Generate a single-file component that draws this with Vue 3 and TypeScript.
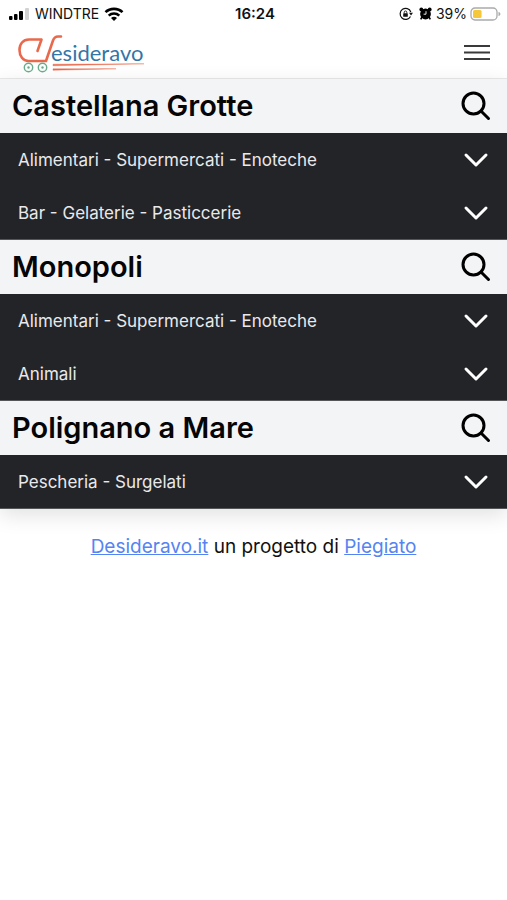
<script setup lang="ts">
import { ref } from 'vue'

interface City {
  name: string
  categories: string[]
}

const cities: City[] = [
  {
    name: 'Castellana Grotte',
    categories: ['Alimentari - Supermercati - Enoteche', 'Bar - Gelaterie - Pasticcerie'],
  },
  { name: 'Monopoli', categories: ['Alimentari - Supermercati - Enoteche', 'Animali'] },
  { name: 'Polignano a Mare', categories: ['Pescheria - Surgelati'] },
]

const battery = ref(39)
</script>

<template>
  <div class="page">
    <div class="status">
      <div class="status-side">
        <svg width="21" height="12" viewBox="0 0 21 12" aria-hidden="true">
          <rect x="0" y="8" width="3.500" height="4" rx="1" />
          <rect x="5" y="6" width="3.500" height="6" rx="1" />
          <rect x="10" y="3" width="4" height="9" rx="1" />
          <rect x="16" y="0" width="4" height="12" rx="1" fill="#d2d2d2" />
        </svg>
        <span class="carrier">WINDTRE</span>
        <svg width="20" height="14" viewBox="0 0 20 14" fill="none" stroke="#000" stroke-width="2.6" aria-hidden="true">
          <path d="M1.500 5.200C6 .7 14 .7 18.500 5.200" />
          <path d="M4.700 8.600c3-2.800 7.600-2.800 10.600 0" />
          <path d="M7 10.900c1.800-1.500 4.200-1.500 6 0L10 14Z" fill="#000" stroke="none" />
        </svg>
      </div>
      <time class="clock">16:24</time>
      <div class="status-side status-end">
        <svg width="14" height="14" viewBox="0 0 14 14" fill="none" stroke="#111" stroke-width="1.200" aria-hidden="true">
          <path d="M11.800 5A5.500 5.500 0 1 0 11.500 9.500" />
          <path d="M10 5.800h4L12 8.500Z" fill="#111" stroke="none" />
          <rect x="4.200" y="6.300" width="4.600" height="3.500" rx=".6" fill="#111" stroke="none" />
          <path d="M5.200 6.500V5.300a1.300 1.300 0 0 1 2.600 0v1.200" stroke-width=".9" />
        </svg>
        <svg class="alarm" width="13" height="13" viewBox="0 0 13 13" aria-hidden="true">
          <circle cx="6.500" cy="7" r="5.400" />
          <circle cx="2.300" cy="2.500" r="1.900" />
          <circle cx="10.700" cy="2.500" r="1.900" />
          <path d="m3 10-1.300 2.300M10 10l1.300 2.300" stroke="#000" stroke-width="1.600" />
          <path d="M7 4.200v3H4.600" fill="none" stroke="#fff" stroke-width=".9" />
        </svg>
        <span class="percent">{{ battery }}%</span>
        <svg width="31" height="14" viewBox="0 0 31 14" aria-hidden="true">
          <rect x="1" y="1" width="26" height="12" rx="4" fill="#fff" stroke="#aaa" stroke-width="1.300" />
          <rect x="3" y="3" :width="battery * 0.22" height="8" rx="1.500" fill="#f5c83c" />
          <path d="M28.500 5c2.500.5 2.500 3.500 0 4Z" fill="#aaa" />
        </svg>
      </div>
    </div>

    <header class="topbar">
      <a class="brand" href="#" aria-label="Desideravo">
        <svg width="130" height="42" viewBox="0 0 130 42" fill="none" aria-hidden="true">
          <g stroke="#e9694c" stroke-width="2.600" stroke-linecap="round" stroke-linejoin="round">
            <path d="M19.500 19 23.500 7.500H11C5 7.500 1.500 12 1.500 18S5 29 10.500 29H28L35 8.500q1.500-4 5-4h3" />
          </g>
          <g stroke="#69ac8c" stroke-width="1.400">
            <circle cx="10.500" cy="35.500" r="4.200" />
            <circle cx="24.500" cy="35.500" r="4.200" />
          </g>
          <g fill="#69ac8c">
            <circle cx="10.500" cy="35.500" r="1.200" />
            <circle cx="24.500" cy="35.500" r="1.200" />
          </g>
          <path d="M35 32.200 126 31.800 35 33.800Z" fill="#e9694c" stroke="#e9694c" stroke-width=".4" />
          <path d="M35 36.800 98 36.800 35 38.300Z" fill="#e9694c" stroke="#e9694c" stroke-width=".4" />
          <text class="brand-text" x="33" y="29">esideravo</text>
        </svg>
      </a>
      <button class="icon-button" type="button" aria-label="Menu">
        <svg width="28" height="18" viewBox="0 0 28 18" stroke="#3a3a3d" stroke-width="2" aria-hidden="true">
          <path d="M1 2h26M1 8.500h26M1 15h26" />
        </svg>
      </button>
    </header>

    <main class="directory">
      <section v-for="city in cities" :key="city.name">
        <div class="city">
          <h2>{{ city.name }}</h2>
          <button class="icon-button" type="button" :aria-label="`Cerca a ${city.name}`">
            <svg width="30" height="30" viewBox="0 0 30 30" fill="none" stroke="#000" stroke-width="3" stroke-linecap="round" aria-hidden="true">
              <circle cx="12.500" cy="12.500" r="10.500" />
              <path d="m20.500 20.500 7 7" />
            </svg>
          </button>
        </div>
        <ul class="categories">
          <li v-for="category in city.categories" :key="category">
            <button class="category" type="button">
              <span>{{ category }}</span>
              <svg width="26" height="16" viewBox="0 0 26 16" fill="none" stroke="#fff" stroke-width="3" stroke-linecap="round" stroke-linejoin="round" aria-hidden="true">
                <path d="m3 3 10 10L23 3" />
              </svg>
            </button>
          </li>
        </ul>
      </section>
    </main>

    <footer class="credits">
      <a href="#">Desideravo.it</a> un progetto di <a href="#">Piegiato</a>
    </footer>
  </div>
</template>

<style>
body {
  background: #fff;
}
</style>

<style scoped>
.page {
  font-family: Inter, "Liberation Sans", sans-serif;
  color: #111;
}

.status {
  display: grid;
  grid-template-columns: 1fr auto 1fr;
  align-items: center;
  height: 27px;
  padding: 0 6px 0 9px;
  font-size: 14px;
}

.status-side {
  display: flex;
  align-items: center;
  gap: 5px;
}

.status-end {
  justify-content: flex-end;
  gap: 3px;
}

.alarm {
  margin: 0 1px 0 3px;
}

.clock {
  font-size: 15px;
  font-weight: 600;
}

.topbar {
  display: flex;
  align-items: center;
  justify-content: space-between;
  height: 51px;
  padding: 0 16px 0 18px;
  border-bottom: 1px solid #e9e9ea;
}

.brand {
  display: flex;
}

.brand-text {
  font-family: Lato, "Open Sans", sans-serif;
  font-size: 22px;
  fill: #3475a8;
}

.icon-button {
  display: flex;
  padding: 0;
  border: 0;
  background: none;
  cursor: pointer;
}

.directory {
  box-shadow: 0 6px 20px rgba(0, 0, 0, 0.12);
}

.city {
  display: flex;
  align-items: center;
  justify-content: space-between;
  height: 54px;
  box-sizing: border-box;
  padding: 0 16px 0 12px;
  background: #f3f4f6;
}

.city h2 {
  margin: 0;
  font-size: 29px;
  font-weight: 600;
  line-height: 36px;
  color: #050505;
}

.categories {
  margin: 0;
  padding: 0;
  list-style: none;
  background: #232428;
  border-bottom: 1px solid #55565a;
}

.category {
  display: flex;
  align-items: center;
  justify-content: space-between;
  width: 100%;
  height: 53px;
  padding: 0 18px;
  border: 0;
  background: none;
  font-family: inherit;
  font-size: 17px;
  color: #e9e9eb;
  text-align: left;
  cursor: pointer;
}

.credits {
  padding: 24px 16px;
  font-size: 19px;
  line-height: 28px;
  text-align: center;
}

.credits a {
  color: #5584f2;
  text-decoration: underline;
}
</style>
